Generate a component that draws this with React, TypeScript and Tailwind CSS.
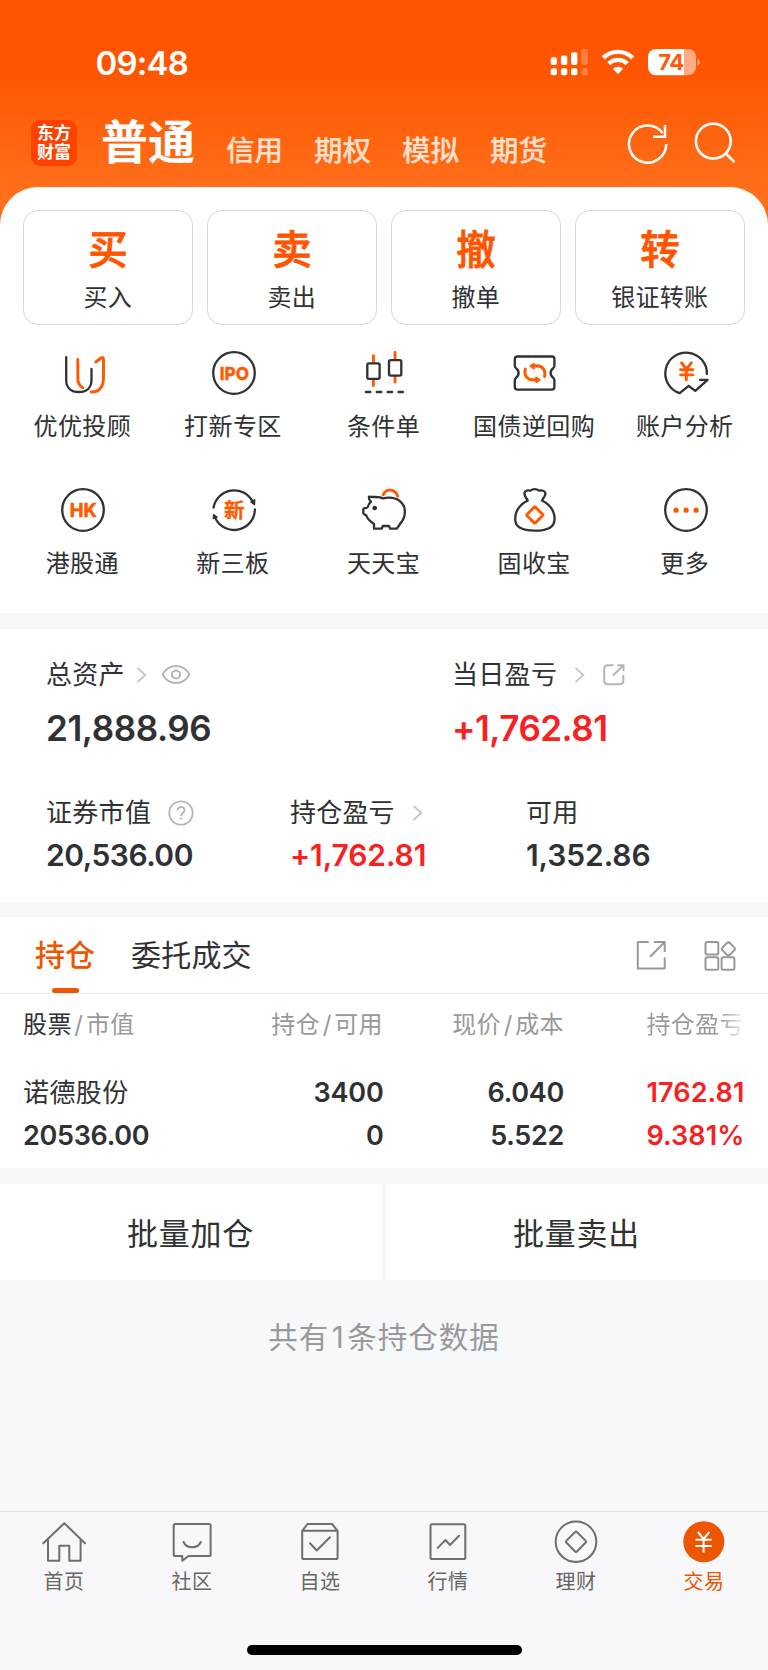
import React from "react";

type Children = { children: React.ReactNode };

const DARK = "#303133";
const ORANGE = "#ff5a00";

function StatusBar() {
  return (
    <div className="flex h-[112px] items-start justify-between pl-[95.5px] pr-[68px]">
      <span className="mt-[42.5px] text-[33px] font-semibold leading-[40px] tracking-[-0.8px] text-white">09:48</span>
      <svg className="mt-[46px]" width="150" height="34" viewBox="0 0 150 34">
        <g fill="#fff">
          <rect x="0.7" y="11.3" width="6.2" height="7.7" rx="2" />
          <rect x="10.9" y="9.5" width="6.4" height="9.5" rx="2" />
          <rect x="21" y="6.2" width="6.4" height="12.8" rx="2" />
          <rect x="0.7" y="22.3" width="6.2" height="7" rx="2" />
          <rect x="10.9" y="22.3" width="6.4" height="7" rx="2" />
          <rect x="21" y="22.3" width="6.4" height="7" rx="2" />
          <g opacity="0.25">
            <rect x="31.2" y="3" width="6.6" height="16" rx="2" />
            <rect x="31.2" y="22.3" width="6.6" height="7" rx="2" />
          </g>
        </g>
        <g fill="none" stroke="#fff" strokeWidth="4.4">
          <path d="M53.2 11.8 A21.5 21.5 0 0 1 82.8 11.8" />
          <path d="M58.7 17.6 A13.6 13.6 0 0 1 77.3 17.6" />
        </g>
        <path d="M68 28 L62.8 22.8 A7.4 7.4 0 0 1 73.2 22.8 Z" fill="#fff" />
        <path d="M106 3 H134 V29.3 H106 A8 8 0 0 1 98 21.3 V11 A8 8 0 0 1 106 3 Z" fill="#fff" />
        <path d="M134 3 H138 A8 8 0 0 1 146 11 V21.3 A8 8 0 0 1 138 29.3 H134 Z" fill="#ffab84" />
        <path d="M147.5 12.5 Q150 14 150 16.2 T147.5 20 Z" fill="#ffab84" />
        <text x="121.2" y="24" textAnchor="middle" fontFamily="Inter" fontSize="22" fontWeight="700" fill="#ff5a0a" textLength="26">74</text>
      </svg>
    </div>
  );
}

function Header() {
  return (
    <div className="flex h-[75px] items-start pl-[31px] pr-[33px]">
      <div className="mt-2 flex h-[46px] w-[46px] flex-col items-center justify-center rounded-[9px] bg-[#ff4200] text-[17px] font-bold leading-[19px] text-white">
        <span>东方</span>
        <span>财富</span>
      </div>
      <span className="ml-[24px] mt-[5px] text-[47px] font-bold leading-[50px] text-white">普通</span>
      <div className="ml-[31px] mt-[22px] flex gap-[31px] text-[28.5px] font-medium leading-[33px] text-[#ffe0cf] [-webkit-text-stroke:0.2px_#ffe0cf]">
        <span>信用</span>
        <span>期权</span>
        <span>模拟</span>
        <span>期货</span>
      </div>
      <svg className="ml-auto mt-[9px]" width="110" height="44" viewBox="0 0 110 44" fill="none" stroke="#fff" strokeWidth="2.5">
        <path d="M41.2 23 A18.6 18.6 0 1 1 37.6 12" />
        <path d="M40 4 V15.7 H28" />
        <circle cx="88.3" cy="20.2" r="17.4" />
        <path d="M100.3 32 L109.3 41" />
      </svg>
    </div>
  );
}

function TradeCard({ mark, label }: { mark: string; label: string }) {
  return (
    <div className="flex h-[115px] flex-1 flex-col items-center rounded-[15px] border border-[#d8d8d8]">
      <span className="mt-[15px] text-[39.5px] font-medium leading-[48px] text-[#ff5500] [-webkit-text-stroke:0.8px_#ff5500]">{mark}</span>
      <span className="mr-[0.5px] mt-[9px] text-[24px] leading-[30px] tracking-[0.3px]">{label}</span>
    </div>
  );
}

function Glyph({ children }: Children) {
  return (
    <svg width="44" height="44" viewBox="0 0 44 44" fill="none" stroke={DARK} strokeWidth="2.3" strokeLinecap="round" strokeLinejoin="round" className="ml-[2px] overflow-visible">
      {children}
    </svg>
  );
}

const glyphText = {
  textAnchor: "middle" as const,
  fontFamily: "Inter, 'Noto Sans CJK SC', sans-serif",
  fontWeight: 700,
  fill: ORANGE,
  stroke: ORANGE,
  strokeWidth: 0.6,
};

const shortcuts: { label: string; icon: React.ReactNode }[] = [
  {
    label: "优优投顾",
    icon: (
      <Glyph>
        <path d="M5.2 6.2 V29 C5.2 36.5 10 41 17.8 41 S30.5 36.5 30.5 29 V18" />
        <path d="M16.8 8.5 V27 C16.8 32 18.5 34.8 21.8 36.8" stroke={ORANGE} strokeWidth="2.9" />
        <path d="M34.8 11 L40 7 Q42.5 5.5 42.5 8.5 V26 C42.5 36 38 41 30.3 41" stroke={ORANGE} strokeWidth="2.9" />
      </Glyph>
    ),
  },
  {
    label: "打新专区",
    icon: (
      <Glyph>
        <circle cx="22" cy="22" r="20.8" />
        <text {...glyphText} x="22.3" y="28.5" fontSize="18" textLength="29" lengthAdjust="spacingAndGlyphs">IPO</text>
      </Glyph>
    ),
  },
  {
    label: "条件单",
    icon: (
      <Glyph>
        <path d="M11.4 4.7 V11 M11.4 29 V34.5 M33 1.5 V8 M33 26 V31" stroke={ORANGE} strokeWidth="2.9" />
        <rect x="5.3" y="12.4" width="12.3" height="15.4" rx="1.5" />
        <rect x="27" y="9.2" width="12.3" height="15.4" rx="1.5" />
        <path d="M4 41 H8.3 M14.8 41 H19.2 M25.7 41 H30 M36.5 41 H40.8" strokeWidth="2.4" />
      </Glyph>
    ),
  },
  {
    label: "国债逆回购",
    icon: (
      <Glyph>
        <path d="M4.5 5.5 H38.8 Q41.4 5.5 41.4 8 V14.8 Q41.4 16.2 40.2 17.2 Q37.6 19 37.6 22 T40.2 26.8 Q41.4 27.8 41.4 29.2 V36 Q41.4 38.6 38.8 38.6 H4.5 Q1.8 38.6 1.8 36 V29.2 Q1.8 27.8 3 26.8 Q5.6 25 5.6 22 T3 17.2 Q1.8 16.2 1.8 14.8 V8 Q1.8 5.5 4.5 5.5 Z" />
        <g stroke={ORANGE} strokeWidth="2.9">
          <path d="M19 14.8 H24 C30 14.8 33 20 31.6 25.5" />
          <path d="M25 28.8 H19.5 C13.5 28.8 10.6 23 12.4 18" />
        </g>
        <path d="M21 12.6 V18 L17 15 Z M23 26.2 V31.6 L27 28.8 Z" fill={ORANGE} stroke={ORANGE} strokeWidth="1.4" />
      </Glyph>
    ),
  },
  {
    label: "账户分析",
    icon: (
      <Glyph>
        <path d="M42.9 23 A20.8 20.8 0 1 0 15.7 42.2 L24.7 34.8 L31.3 39.8 L43.6 28.8 H36" />
        <path d="M17.6 11.8 L22.3 18.2 L27.4 11.8 M22.3 18.5 V29 M16.6 18.8 H28.8 M16.6 23.9 H28.8" stroke={ORANGE} strokeWidth="2.9" />
      </Glyph>
    ),
  },
  {
    label: "港股通",
    icon: (
      <Glyph>
        <circle cx="22" cy="22" r="20.8" />
        <text {...glyphText} x="22.2" y="28.5" fontSize="18.5" textLength="27" lengthAdjust="spacingAndGlyphs">HK</text>
      </Glyph>
    ),
  },
  {
    label: "新三板",
    icon: (
      <Glyph>
        <path d="M1.6 19.5 A20.8 20.8 0 0 1 40.5 13.5" />
        <path d="M42.9 21.5 A20.8 20.8 0 0 1 3.5 30.5" />
        <path d="M38.8 14 L42.8 11.6 L42.6 16.8 Z M1.2 30.6 L1.6 26.4 L5.2 29.2 Z" fill={DARK} strokeWidth="1.2" />
        <text {...glyphText} strokeWidth="0.3" x="22.2" y="29.5" fontSize="20.5">新</text>
      </Glyph>
    ),
  },
  {
    label: "天天宝",
    icon: (
      <Glyph>
        <path d="M21.3 6.8 C23.5 .3 33.5 .3 35.6 8.2" stroke={ORANGE} strokeWidth="2.9" />
        <path d="M21 10.4 C17 8 12 9.6 7 8.7 C6.6 10.5 7.4 12.4 8.9 13.7 Q6.5 16 5.8 19 Q5.2 20 2.6 20.2 Q1.3 20.3 1.3 21.5 V24.8 Q1.3 26 2.6 26.5 L4.2 27.3 C5 31 8.5 33.5 12 36 V40.7 H19.8 L20.8 38 H27 L28.2 40.7 H34.7 C36.5 39 37.5 36.5 39 34.5 C42 31 43.2 27.5 42.8 22.5 C42.2 14.5 35.5 9.7 27 9.7 Q24 9.7 21 10.4" />
        <circle cx="12.7" cy="20" r="1.2" fill={DARK} />
      </Glyph>
    ),
  },
  {
    label: "固收宝",
    icon: (
      <Glyph>
        <path d="M14.8 12.4 C12.8 10 11.2 7.5 11.5 5 C12 2.5 15 2 17.2 2.7 Q21.8 -.4 26.2 2.7 C28.7 2 31.8 2.7 32.4 5 C32.6 7.5 30.6 10 29 12.4 C36 16 41.6 22 41.6 31 C41.6 39 35.5 42.7 22 42.7 S2.2 39 2.2 31 C2.2 22 7.8 16 14.8 12.4 Z" />
        <rect x="15.8" y="21" width="12" height="12" rx="1.2" transform="rotate(45 21.8 27)" stroke={ORANGE} strokeWidth="2.9" />
      </Glyph>
    ),
  },
  {
    label: "更多",
    icon: (
      <Glyph>
        <circle cx="22" cy="22" r="20.8" />
        <g fill={ORANGE} stroke="none">
          <circle cx="12.1" cy="22.2" r="2.6" />
          <circle cx="22.1" cy="22.2" r="2.6" />
          <circle cx="32.1" cy="22.2" r="2.6" />
        </g>
      </Glyph>
    ),
  },
];

function Chevron({ className }: { className: string }) {
  return (
    <svg className={className} width="12" height="18" viewBox="0 0 12 18" fill="none" stroke="#c4c4c4" strokeWidth="1.8">
      <path d="M1.5 1.8 L9.3 9 L1.5 16.2" />
    </svg>
  );
}

function Assets() {
  return (
    <section className="flex h-[273px] flex-col bg-white pt-[30px]">
      <div className="flex pl-[46px]">
        <div className="w-[406px]">
          <div className="flex h-[32px] items-center">
            <span className="text-[26px] leading-[32px] tracking-[0.2px]">总资产</span>
            <Chevron className="ml-[11px]" />
            <svg className="ml-[13px]" width="30" height="22" viewBox="0 0 30 22" fill="none" stroke="#b5b5b5" strokeWidth="2">
              <path d="M1.5 10.5 C5 4.5 9.5 1.9 15 1.9 S25 4.5 28.5 10.5 C25 16.5 20.5 19.1 15 19.1 S5 16.5 1.5 10.5 Z" strokeLinejoin="round" />
              <circle cx="15" cy="10.5" r="4.1" />
            </svg>
          </div>
          <div className="mt-[15px] text-[35px] font-semibold leading-[44px] tracking-[-0.4px]">21,888.96</div>
        </div>
        <div>
          <div className="flex h-[32px] items-center">
            <span className="text-[26px] leading-[32px] tracking-[0.3px]">当日盈亏</span>
            <Chevron className="ml-[17px]" />
            <svg className="ml-[16px]" width="24" height="24" viewBox="0 0 24 24" fill="none" stroke="#b5b5b5" strokeWidth="2">
              <path d="M11.5 2.2 H6 Q2.2 2.2 2.2 6 V17.5 Q2.2 21.3 6 21.3 H17.5 Q21.3 21.3 21.3 17.5 V12" />
              <path d="M15.5 2.2 H21.5 V8 M21.5 2.2 L11 12.5" />
            </svg>
          </div>
          <div className="mt-[15px] text-[35px] font-semibold leading-[44px] tracking-[-0.5px] text-[#f9211f]">+1,762.81</div>
        </div>
      </div>
      <div className="mt-[47px] flex pl-[46px]">
        <div className="w-[244px]">
          <div className="flex h-[32px] items-center">
            <span className="text-[26px] leading-[32px] tracking-[0.3px]">证券市值</span>
            <svg className="ml-[17px]" width="26" height="26" viewBox="0 0 26 26" fill="none" stroke="#b5b5b5" strokeWidth="1.8">
              <circle cx="13" cy="13" r="11.7" />
              <path d="M9.6 10.6 C9.6 5.8 16.5 6 16.5 10.2 C16.5 12.8 13.1 13 13.1 16.2" />
              <path d="M13.1 17.8 V19.6" strokeWidth="2" />
            </svg>
          </div>
          <div className="mt-[8px] text-[30px] font-semibold leading-[36px] tracking-[-0.5px]">20,536.00</div>
        </div>
        <div className="w-[236px]">
          <div className="flex h-[32px] items-center">
            <span className="text-[26px] leading-[32px] tracking-[0.2px]">持仓盈亏</span>
            <Chevron className="ml-[17px]" />
          </div>
          <div className="mt-[8px] text-[30px] font-semibold leading-[36px] tracking-[-0.1px] text-[#f9211f]">+1,762.81</div>
        </div>
        <div>
          <div className="flex h-[32px] items-center">
            <span className="text-[26px] leading-[32px] tracking-[0.2px]">可用</span>
          </div>
          <div className="mt-[8px] text-[30px] font-semibold leading-[36px] tracking-[-0.1px]">1,352.86</div>
        </div>
      </div>
    </section>
  );
}

function Holdings() {
  return (
    <section className="h-[251px] bg-white">
      <div className="flex h-[77px] items-start border-b border-[#ededf0] pl-[35px] pr-[32px] text-[30px]">
        <div className="flex flex-col items-center font-medium text-[#ee5500]">
          <span className="mt-[19px] h-[38px] leading-[38px]">持仓</span>
          <span className="mt-[14px] h-[5px] w-[27px] rounded-[2.5px] bg-[#ee5500]" />
        </div>
        <span className="ml-[36px] mt-[19px] leading-[38px] tracking-[0.2px]">委托成交</span>
        <svg className="ml-auto mt-[23px]" width="100" height="32" viewBox="0 0 100 32" fill="none" stroke="#999" strokeWidth="2" strokeLinejoin="round">
          <path d="M12.7 2 H1.8 V28.6 H28.7 V17.5" />
          <path d="M18 2 H28.7 V12 M28.5 2.2 L14 16.8" />
          <rect x="69.5" y="2" width="12.8" height="12.6" rx="1.5" />
          <rect x="69.5" y="17.2" width="12.8" height="12.6" rx="1.5" />
          <rect x="85.6" y="17.2" width="12.8" height="12.6" rx="1.5" />
          <rect x="87.2" y="3.7" width="10.4" height="10.4" rx="2.5" transform="rotate(45 92.4 8.9)" />
        </svg>
      </div>
      <div className="flex pl-[23px] pt-[16px] text-[24px] leading-[30px] tracking-[0.4px] text-[#999]">
        <div className="w-[161px]">
          <span className="text-[#303133]">股票</span>
          <span className="px-[2.5px]">/</span>市值
        </div>
        <div className="w-[199px] text-right">
          持仓<span className="px-[2.5px]">/</span>可用
        </div>
        <div className="w-[181px] text-right">
          现价<span className="px-[2.5px]">/</span>成本
        </div>
        <div className="w-[180px] bg-[linear-gradient(90deg,#999_86%,#ffffff_102%)] bg-clip-text text-right text-transparent">持仓盈亏</div>
      </div>
      <div className="mt-[36px] flex pl-[23px] text-[27px] font-semibold leading-[34px]">
        <div className="w-[161px]">
          <div className="text-[26px] font-normal tracking-[0.4px]">诺德股份</div>
          <div className="mt-[9px] tracking-[-0.3px]">20536.00</div>
        </div>
        <div className="w-[199.5px] text-right tracking-[-0.2px]">
          <div>3400</div>
          <div className="mt-[9px]">0</div>
        </div>
        <div className="w-[180.5px] text-right tracking-[-0.3px]">
          <div>6.040</div>
          <div className="mt-[9px]">5.522</div>
        </div>
        <div className="w-[180.5px] text-right text-[#f9211f]">
          <div className="tracking-[0.1px]">1762.81</div>
          <div className="mt-[9px] tracking-[0.1px]">9.381%</div>
        </div>
      </div>
    </section>
  );
}

const tabs: { label: string; active?: boolean; icon: React.ReactNode }[] = [
  {
    label: "首页",
    icon: <path d="M.3 22.3 L21.3 2.2 L42 22.3 M5 18.5 V39.7 H16.3 V24.7 H26.3 V39.7 H37.6 V18.5" />,
  },
  {
    label: "社区",
    icon: <path d="M4.2 3 H38 Q39.6 3 39.6 4.6 V33.4 Q39.6 35 38 35 H17.5 L11.3 39.8 V35 H4.2 Q2.7 35 2.7 33.4 V4.6 Q2.7 3 4.2 3 Z M12.6 21 C15.5 28 26.8 28 29.7 21" />,
  },
  {
    label: "自选",
    icon: <path d="M3.2 9.8 L8.6 3 H33 L38.6 9.8 V36.4 Q38.6 38.1 37 38.1 H4.8 Q3.2 38.1 3.2 36.4 Z M3.2 9.8 H38.6 M11 22.3 L17.7 29.5 L31 16.3" />,
  },
  {
    label: "行情",
    icon: <path d="M5 3.2 H36.7 Q38.3 3.2 38.3 4.8 V36.5 Q38.3 38.1 36.7 38.1 H5 Q3.5 38.1 3.5 36.5 V4.8 Q3.5 3.2 5 3.2 Z M10.7 26.9 L18.5 19 L23 24 L32 14.7" />,
  },
  {
    label: "理财",
    icon: (
      <>
        <circle cx="21" cy="20.7" r="20.3" />
        <rect x="13.5" y="13.2" width="15" height="15" rx="1.2" transform="rotate(45 21 20.7)" />
      </>
    ),
  },
  {
    label: "交易",
    active: true,
    icon: (
      <>
        <circle cx="20.8" cy="20.7" r="20.5" fill="#ee5500" stroke="none" />
        <path d="M14.9 11 L20.6 18 L26.3 11 M20.6 18 V31.5 M12.5 18.7 H28.7 M12.5 25 H28.7" stroke="#fff" strokeWidth="2" strokeLinecap="butt" />
      </>
    ),
  },
];

export default function App() {
  return (
    <div className="flex h-[1670px] w-[768px] flex-col overflow-hidden bg-[#f6f8fa] font-['Inter','Noto_Sans_CJK_SC',sans-serif] text-[#303133]">
      <div className="bg-[linear-gradient(180deg,#ff5500_0px,#ff5500_70px,#ff6d18_180px,#ff701d_230px)]">
        <StatusBar />
        <Header />
        <section className="h-[426px] rounded-t-[38px] bg-white pt-[23px]">
          <div className="flex gap-[14px] px-[23px]">
            <TradeCard mark="买" label="买入" />
            <TradeCard mark="卖" label="卖出" />
            <TradeCard mark="撤" label="撤单" />
            <TradeCard mark="转" label="银证转账" />
          </div>
          <div className="mt-[26px] grid grid-cols-5 gap-y-[32px] pl-[7px] pr-[8px]">
            {shortcuts.map((s) => (
              <div key={s.label} className="flex h-[105px] flex-col items-center">
                {s.icon}
                <span className="mt-[15.5px] whitespace-nowrap text-[24px] leading-[32px] tracking-[0.4px]">{s.label}</span>
              </div>
            ))}
          </div>
        </section>
      </div>
      <div className="mt-4 shrink-0">
        <Assets />
      </div>
      <div className="mt-[15px] shrink-0">
        <Holdings />
      </div>
      <div className="mt-4 flex h-[96px] shrink-0 gap-[4px] text-[31px] leading-[40px] tracking-[0.7px]">
        <div className="flex flex-1 items-center justify-center bg-white pr-[1px] pt-[3px]">批量加仓</div>
        <div className="flex flex-1 items-center justify-center bg-white pr-[1px] pt-[3px]">批量卖出</div>
      </div>
      <div className="mt-[38px] text-center text-[29.5px] leading-[38px] tracking-[1px] text-[#999]">共有<span className="px-[2.5px]">1</span>条持仓数据</div>
      <nav className="mt-auto flex h-[134px] shrink-0 border-t border-[#e1e2e4] bg-[#f8f8fa] pt-[9px]">
        {tabs.map((t) => (
          <div key={t.label} className={t.active ? "flex flex-1 flex-col items-center text-[#ee5500]" : "flex flex-1 flex-col items-center text-[#666]"}>
            <svg width="42" height="42" viewBox="0 0 42 42" fill="none" stroke="#6e6e6e" strokeWidth="2" strokeLinecap="round" strokeLinejoin="round" className="overflow-visible">
              {t.icon}
            </svg>
            <span className="mt-[5px] text-[20px] leading-[28px] tracking-[0.5px]">{t.label}</span>
          </div>
        ))}
      </nav>
      <div className="flex h-[25px] shrink-0 justify-center bg-[#f8f8fa]">
        <div className="h-[10px] w-[275px] rounded-full bg-black" />
      </div>
    </div>
  );
}
